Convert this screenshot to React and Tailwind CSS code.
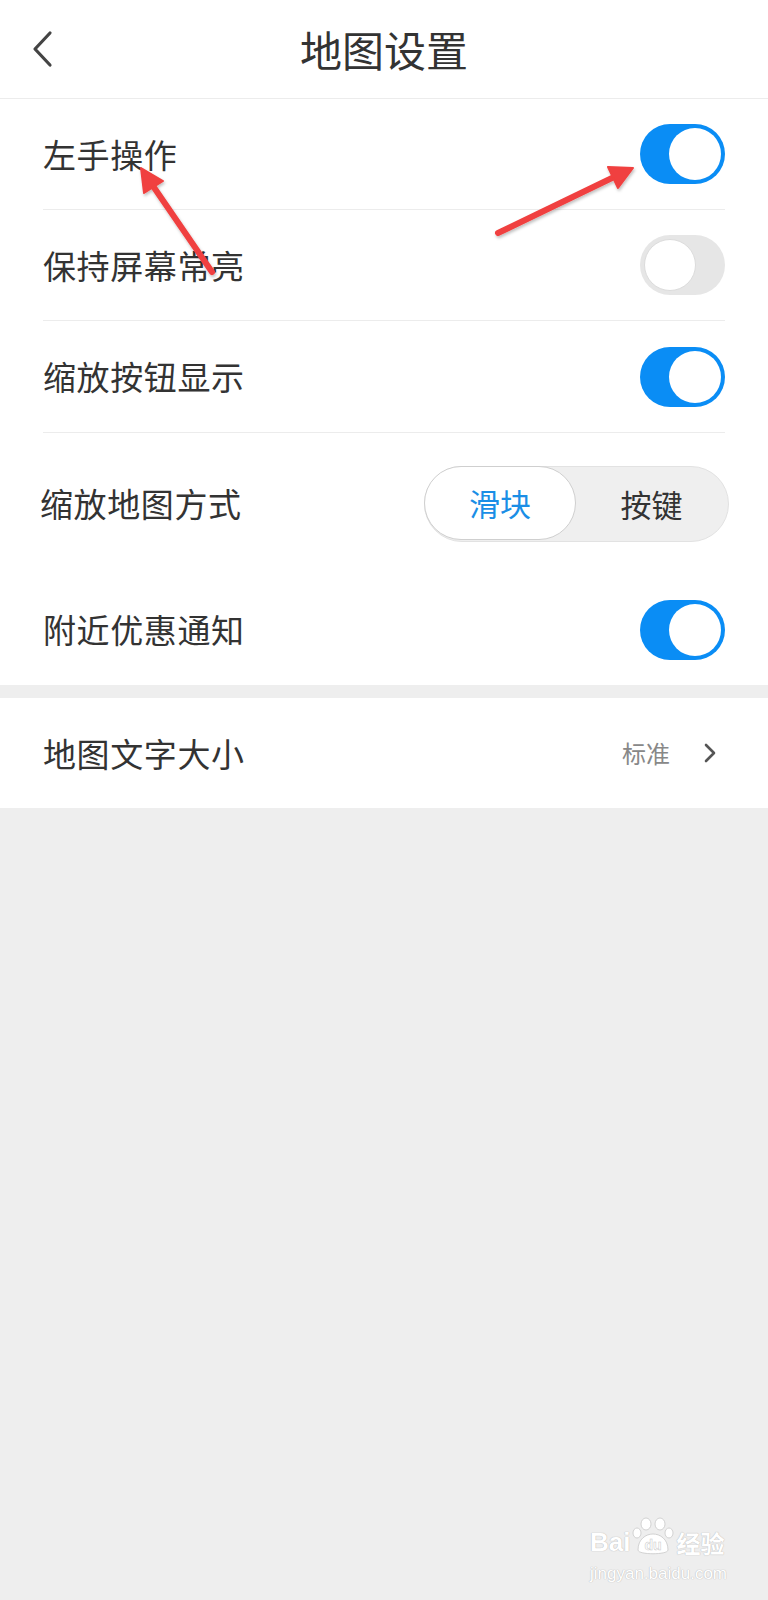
import React from "react";

const FONT = { fontFamily: '"Noto Sans CJK SC", "Noto Sans", sans-serif' };

function Toggle({ on }) {
  return (
    <div
      className={
        "w-[85px] h-[60px] rounded-full flex items-center px-[4px] shrink-0 " +
        (on ? "bg-[#0a8df5] justify-end" : "bg-[#e6e6e6] justify-start")
      }
    >
      <div
        className={
          "w-[52px] h-[52px] rounded-full bg-white " +
          (on ? "" : "border border-[#dcdcdc]")
        }
      />
    </div>
  );
}

function Label({ children }) {
  return (
    <span className="text-[33px] tracking-[0.6px] text-[#333333] leading-none">{children}</span>
  );
}

function Row({ label, children, border = true }) {
  return (
    <div
      className={
        "h-[111px] flex items-center justify-between " +
        (border ? "border-b border-[#ececec]" : "")
      }
    >
      <Label>{label}</Label>
      {children}
    </div>
  );
}

function Arrows() {
  return (
    <svg
      className="absolute left-0 top-0 pointer-events-none"
      width="768"
      height="320"
      viewBox="0 0 768 320"
    >
      <defs>
        <filter id="sh" x="-20%" y="-20%" width="140%" height="140%">
          <feDropShadow dx="1" dy="2" stdDeviation="1.5" floodColor="#000" floodOpacity="0.25" />
        </filter>
      </defs>
      <g filter="url(#sh)" fill="#f0403f" stroke="#f0403f">
        <line x1="212" y1="272" x2="153" y2="186" strokeWidth="6" strokeLinecap="round" />
        <polygon points="141,168 163,181 144,193" strokeWidth="2" strokeLinejoin="round" />
        <line x1="498" y1="233" x2="613" y2="177.5" strokeWidth="6" strokeLinecap="round" />
        <polygon points="633,168 618,188 608,167" strokeWidth="2" strokeLinejoin="round" />
      </g>
    </svg>
  );
}

function Watermark() {
  const shadow = { textShadow: "0 0 1px #bdbdbd, 0 0 1px #bdbdbd" };
  return (
    <div className="absolute right-[41px] bottom-[18px] flex flex-col items-start pointer-events-none select-none">
      <div className="flex items-end">
        <span
          className="text-[26px] font-bold text-white leading-none"
          style={{ fontFamily: '"Liberation Sans", sans-serif', ...shadow }}
        >
          Bai
        </span>
        <svg width="44" height="38" viewBox="0 0 44 38" className="mx-[1px]">
          <g fill="#fff" stroke="#c8c8c8" strokeWidth="0.8">
            <ellipse cx="15" cy="7" rx="5" ry="6" />
            <ellipse cx="29" cy="7" rx="5" ry="6" />
            <ellipse cx="6" cy="16" rx="4" ry="5" />
            <ellipse cx="38" cy="16" rx="4" ry="5" />
            <path d="M7 33 C7 22 15 17 22 17 C29 17 37 22 37 33 C37 38 7 38 7 33 Z" />
          </g>
          <text x="22" y="33" textAnchor="middle" fontSize="14" fontWeight="bold" fill="#fff" stroke="#c8c8c8" strokeWidth="0.5" fontFamily="Liberation Sans, sans-serif">du</text>
        </svg>
        <span
          className="text-[24px] font-bold text-white leading-none"
          style={{ ...FONT, ...shadow }}
        >
          经验
        </span>
      </div>
      <span
        className="text-[17px] text-white leading-none mt-[10px]"
        style={{ fontFamily: '"Liberation Sans", sans-serif', ...shadow }}
      >
        jingyan.baidu.com
      </span>
    </div>
  );
}

export default function App() {
  return (
    <div className="relative w-[768px] min-h-[1600px] bg-[#eeeeee]" style={FONT}>
      {/* Header */}
      <div className="h-[99px] bg-white grid grid-cols-[1fr_auto_1fr] items-center border-b border-[#ececec]">
        <div className="pl-[30px] flex items-center">
          <svg width="24" height="38" viewBox="0 0 24 38">
            <path d="M20 3 L5 19 L20 35" fill="none" stroke="#444" strokeWidth="3.2" strokeLinecap="round" strokeLinejoin="round" />
          </svg>
        </div>
        <div className="text-[42px] text-[#333333] leading-none">地图设置</div>
        <div />
      </div>

      {/* Settings group */}
      <div className="bg-white px-[43px]">
        <Row label="左手操作">
          <Toggle on />
        </Row>
        <Row label="保持屏幕常亮">
          <Toggle on={false} />
        </Row>
        <Row label="缩放按钮显示" border={false}>
          <Toggle on />
        </Row>
      </div>
      <div className="bg-white">
        <div className="mx-[43px] border-t border-[#ececec]" />
        <div className="h-[141px] flex items-center justify-between pl-[40px] pr-[39px]">
          <Label>缩放地图方式</Label>
          <div className="w-[305px] h-[76px] rounded-full bg-[#efefef] border border-[#e2e2e2] flex">
            <div className="w-[152px] h-full rounded-full bg-white border-[1.5px] border-[#cfcfcf] flex items-center justify-center -m-[1px]">
              <span className="text-[31px] text-[#1a8ee6] leading-none">滑块</span>
            </div>
            <div className="flex-1 flex items-center justify-center">
              <span className="text-[31px] text-[#333333] leading-none">按键</span>
            </div>
          </div>
        </div>
        <div className="px-[43px]">
          <Row label="附近优惠通知" border={false}>
            <Toggle on />
          </Row>
        </div>
      </div>

      <div className="h-[13px]" />

      <div className="bg-white px-[43px]">
        <div className="h-[110px] flex items-center justify-between">
          <Label>地图文字大小</Label>
          <div className="flex items-center">
            <span className="text-[24px] text-[#888888] leading-none">标准</span>
            <svg width="14" height="22" viewBox="0 0 14 22" className="ml-[33px] mr-[8px]">
              <path d="M3 3 L11 11 L3 19" fill="none" stroke="#555" strokeWidth="2.6" strokeLinecap="round" strokeLinejoin="round" />
            </svg>
          </div>
        </div>
      </div>

      <Arrows />
      <Watermark />
    </div>
  );
}
